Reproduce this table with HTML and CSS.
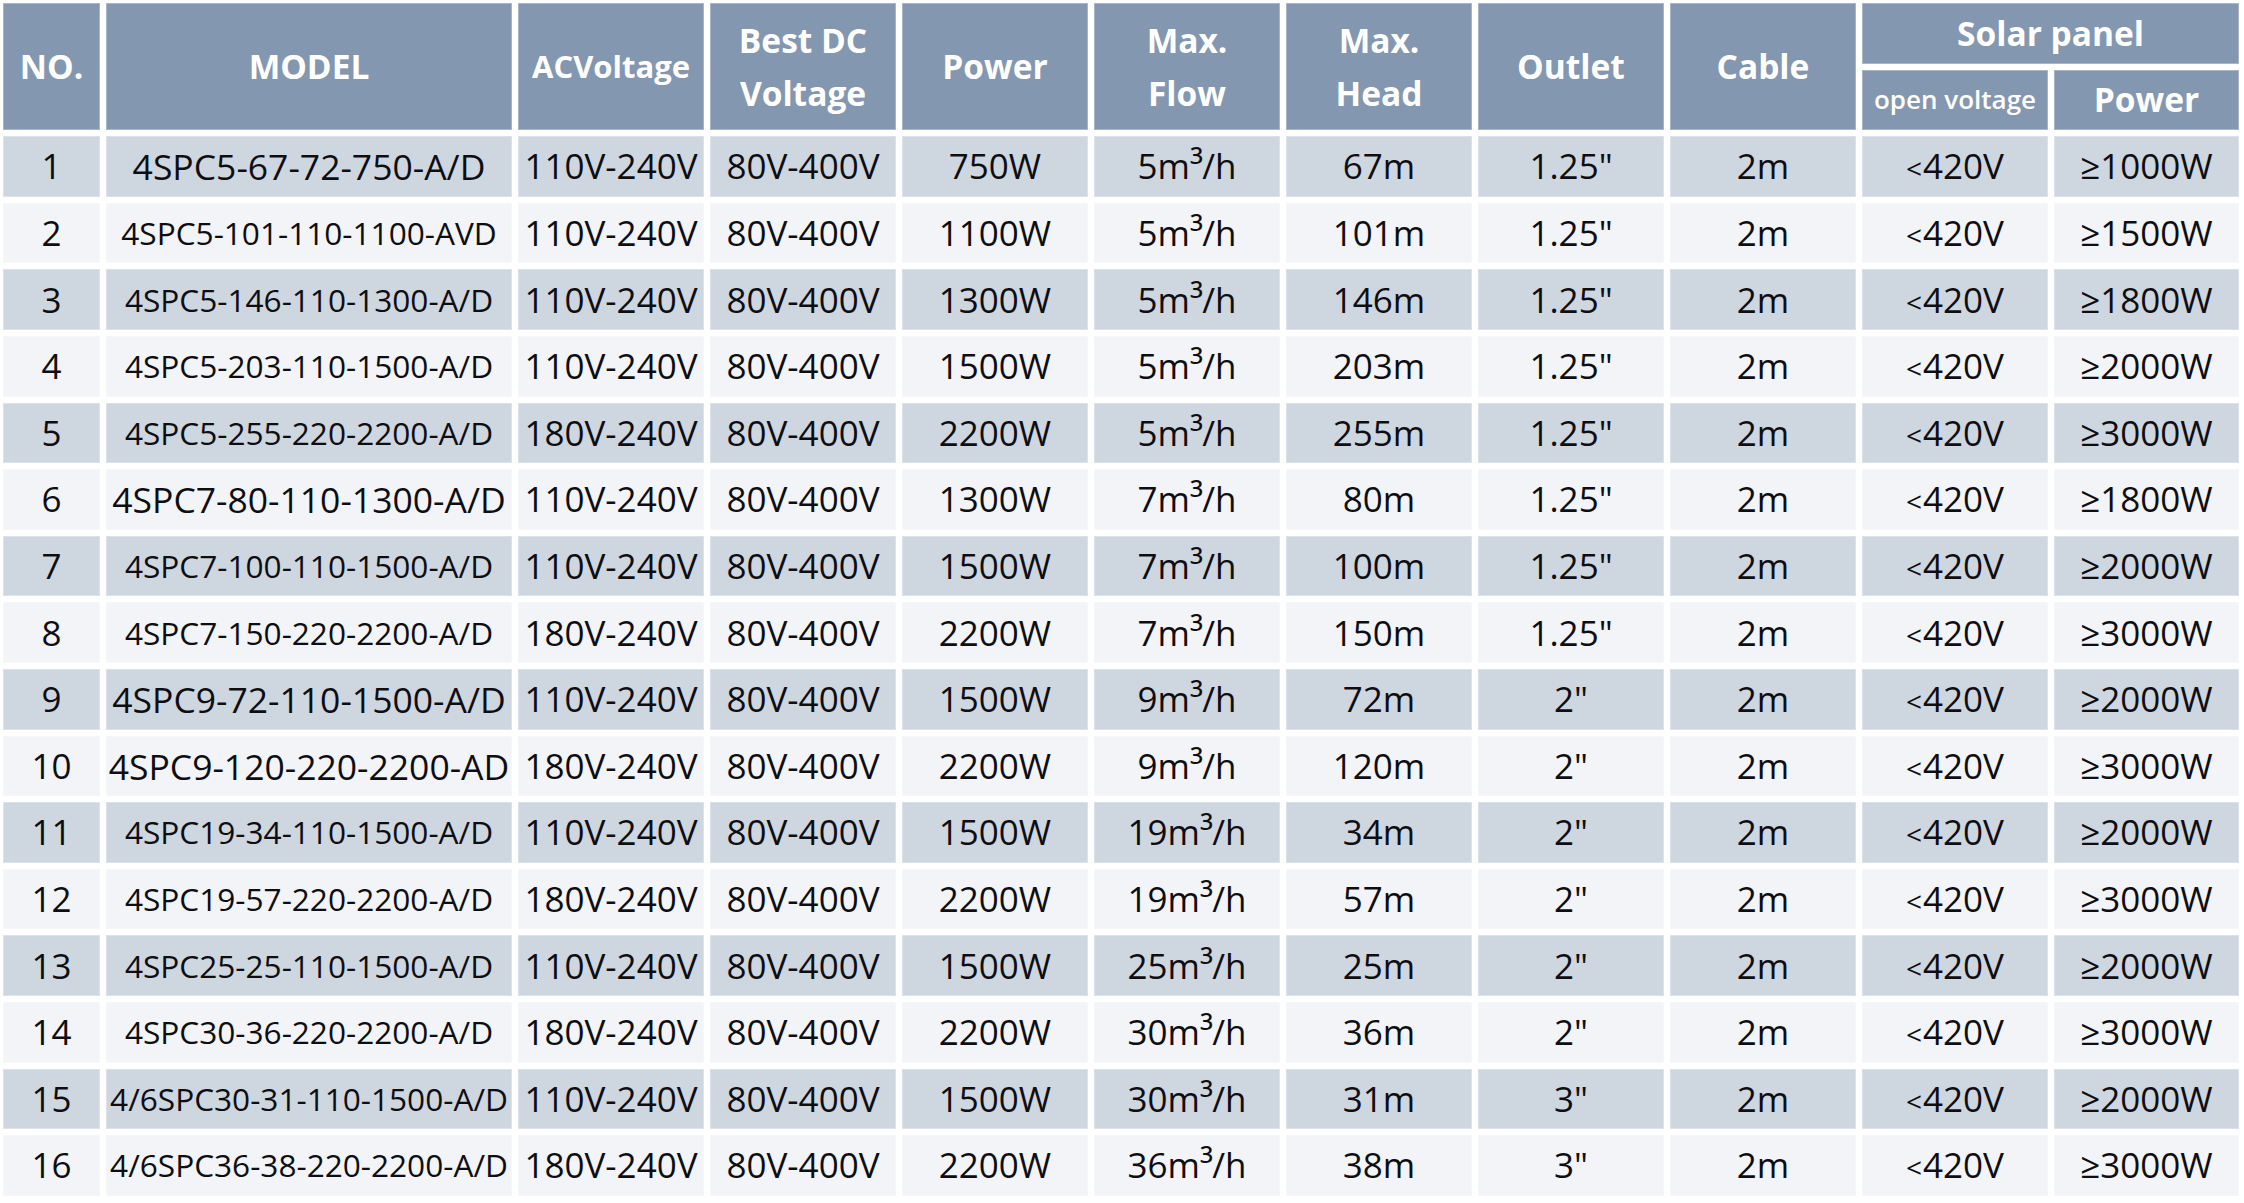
FILE: index.html
```html
<!DOCTYPE html>
<html lang="en">
<head>
<meta charset="utf-8">
<title>Solar Pump Specifications</title>
<link rel="stylesheet" href="styles.css">
</head>
<body>
<table class="spec">
  <colgroup>
    <col class="c-no">
    <col class="c-model">
    <col class="c-std">
    <col class="c-std">
    <col class="c-std">
    <col class="c-std">
    <col class="c-std">
    <col class="c-std">
    <col class="c-std">
    <col class="c-std">
    <col class="c-last">
  </colgroup>
  <thead>
    <tr class="h1">
      <th rowspan="2">NO.</th>
      <th rowspan="2">MODEL</th>
      <th rowspan="2" class="h-ac">ACVoltage</th>
      <th rowspan="2" class="h-two">Best DC<br>Voltage</th>
      <th rowspan="2">Power</th>
      <th rowspan="2" class="h-two">Max.<br>Flow</th>
      <th rowspan="2" class="h-two">Max.<br>Head</th>
      <th rowspan="2">Outlet</th>
      <th rowspan="2">Cable</th>
      <th colspan="2">Solar panel</th>
    </tr>
    <tr class="h2">
      <th class="h-small">open voltage</th>
      <th>Power</th>
    </tr>
  </thead>
  <tbody>
    <tr><td>1</td><td class="m-lg">4SPC5-67-72-750-A/D</td><td>110V-240V</td><td>80V-400V</td><td>750W</td><td>5m<span class="cube">³</span>/h</td><td>67m</td><td>1.25"</td><td>2m</td><td><span class="lt">&lt;</span>420V</td><td>≥1000W</td></tr>
    <tr><td>2</td><td class="m-sm">4SPC5-101-110-1100-AVD</td><td>110V-240V</td><td>80V-400V</td><td>1100W</td><td>5m<span class="cube">³</span>/h</td><td>101m</td><td>1.25"</td><td>2m</td><td><span class="lt">&lt;</span>420V</td><td>≥1500W</td></tr>
    <tr><td>3</td><td class="m-sm">4SPC5-146-110-1300-A/D</td><td>110V-240V</td><td>80V-400V</td><td>1300W</td><td>5m<span class="cube">³</span>/h</td><td>146m</td><td>1.25"</td><td>2m</td><td><span class="lt">&lt;</span>420V</td><td>≥1800W</td></tr>
    <tr><td>4</td><td class="m-sm">4SPC5-203-110-1500-A/D</td><td>110V-240V</td><td>80V-400V</td><td>1500W</td><td>5m<span class="cube">³</span>/h</td><td>203m</td><td>1.25"</td><td>2m</td><td><span class="lt">&lt;</span>420V</td><td>≥2000W</td></tr>
    <tr><td>5</td><td class="m-sm">4SPC5-255-220-2200-A/D</td><td>180V-240V</td><td>80V-400V</td><td>2200W</td><td>5m<span class="cube">³</span>/h</td><td>255m</td><td>1.25"</td><td>2m</td><td><span class="lt">&lt;</span>420V</td><td>≥3000W</td></tr>
    <tr><td>6</td><td class="m-lg">4SPC7-80-110-1300-A/D</td><td>110V-240V</td><td>80V-400V</td><td>1300W</td><td>7m<span class="cube">³</span>/h</td><td>80m</td><td>1.25"</td><td>2m</td><td><span class="lt">&lt;</span>420V</td><td>≥1800W</td></tr>
    <tr><td>7</td><td class="m-sm">4SPC7-100-110-1500-A/D</td><td>110V-240V</td><td>80V-400V</td><td>1500W</td><td>7m<span class="cube">³</span>/h</td><td>100m</td><td>1.25"</td><td>2m</td><td><span class="lt">&lt;</span>420V</td><td>≥2000W</td></tr>
    <tr><td>8</td><td class="m-sm">4SPC7-150-220-2200-A/D</td><td>180V-240V</td><td>80V-400V</td><td>2200W</td><td>7m<span class="cube">³</span>/h</td><td>150m</td><td>1.25"</td><td>2m</td><td><span class="lt">&lt;</span>420V</td><td>≥3000W</td></tr>
    <tr><td>9</td><td class="m-lg">4SPC9-72-110-1500-A/D</td><td>110V-240V</td><td>80V-400V</td><td>1500W</td><td>9m<span class="cube">³</span>/h</td><td>72m</td><td>2"</td><td>2m</td><td><span class="lt">&lt;</span>420V</td><td>≥2000W</td></tr>
    <tr><td>10</td><td class="m-lg">4SPC9-120-220-2200-AD</td><td>180V-240V</td><td>80V-400V</td><td>2200W</td><td>9m<span class="cube">³</span>/h</td><td>120m</td><td>2"</td><td>2m</td><td><span class="lt">&lt;</span>420V</td><td>≥3000W</td></tr>
    <tr><td>11</td><td class="m-sm">4SPC19-34-110-1500-A/D</td><td>110V-240V</td><td>80V-400V</td><td>1500W</td><td>19m<span class="cube">³</span>/h</td><td>34m</td><td>2"</td><td>2m</td><td><span class="lt">&lt;</span>420V</td><td>≥2000W</td></tr>
    <tr><td>12</td><td class="m-sm">4SPC19-57-220-2200-A/D</td><td>180V-240V</td><td>80V-400V</td><td>2200W</td><td>19m<span class="cube">³</span>/h</td><td>57m</td><td>2"</td><td>2m</td><td><span class="lt">&lt;</span>420V</td><td>≥3000W</td></tr>
    <tr><td>13</td><td class="m-sm">4SPC25-25-110-1500-A/D</td><td>110V-240V</td><td>80V-400V</td><td>1500W</td><td>25m<span class="cube">³</span>/h</td><td>25m</td><td>2"</td><td>2m</td><td><span class="lt">&lt;</span>420V</td><td>≥2000W</td></tr>
    <tr><td>14</td><td class="m-sm">4SPC30-36-220-2200-A/D</td><td>180V-240V</td><td>80V-400V</td><td>2200W</td><td>30m<span class="cube">³</span>/h</td><td>36m</td><td>2"</td><td>2m</td><td><span class="lt">&lt;</span>420V</td><td>≥3000W</td></tr>
    <tr><td>15</td><td class="m-sm">4/6SPC30-31-110-1500-A/D</td><td>110V-240V</td><td>80V-400V</td><td>1500W</td><td>30m<span class="cube">³</span>/h</td><td>31m</td><td>3"</td><td>2m</td><td><span class="lt">&lt;</span>420V</td><td>≥2000W</td></tr>
    <tr><td>16</td><td class="m-sm">4/6SPC36-38-220-2200-A/D</td><td>180V-240V</td><td>80V-400V</td><td>2200W</td><td>36m<span class="cube">³</span>/h</td><td>38m</td><td>3"</td><td>2m</td><td><span class="lt">&lt;</span>420V</td><td>≥3000W</td></tr>
  </tbody>
</table>
</body>
</html>
```

FILE: styles.css
```css
html, body {
  margin: 0;
  padding: 0;
  background: #ffffff;
  overflow: hidden;
}

.spec {
  border-collapse: separate;
  border-spacing: 6px;
  table-layout: fixed;
  width: 2248px;
  margin: -3px 0 0 -3px;
  font-family: "Open Sans", "Noto Sans", sans-serif;
  color: #0e0e12;
}

.c-no { width: 97px; }
.c-model { width: 406px; }
.c-std { width: 186px; }
.c-last { width: 185px; }

.spec th,
.spec td {
  padding: 0;
  text-align: center;
  vertical-align: middle;
  white-space: nowrap;
  box-shadow: inset 0 0 0 1px rgba(255, 255, 255, 0.3);
}

.spec th {
  background: #8497b0;
  color: #ffffff;
  font-weight: 700;
  font-size: 33.5px;
  line-height: 53px;
  height: 60.6px;
}

.spec th.h-ac { font-size: 31px; }
.spec th.h-small { font-size: 26px; font-weight: 600; }

.spec td {
  height: 60.6px;
  font-size: 35px;
  line-height: 40px;
}

.spec tbody tr:nth-child(odd) td { background: #ced6e0; }
.spec tbody tr:nth-child(even) td { background: #f2f4f7; }

.spec td.m-lg { font-size: 35.5px; }
.spec td.m-sm { font-size: 31.6px; }

.cube {
  font-size: 1.08em;
  line-height: 0;
  letter-spacing: -1px;
}

.lt {
  font-size: 0.8em;
  line-height: 0;
  margin-right: 1px;
}
```
